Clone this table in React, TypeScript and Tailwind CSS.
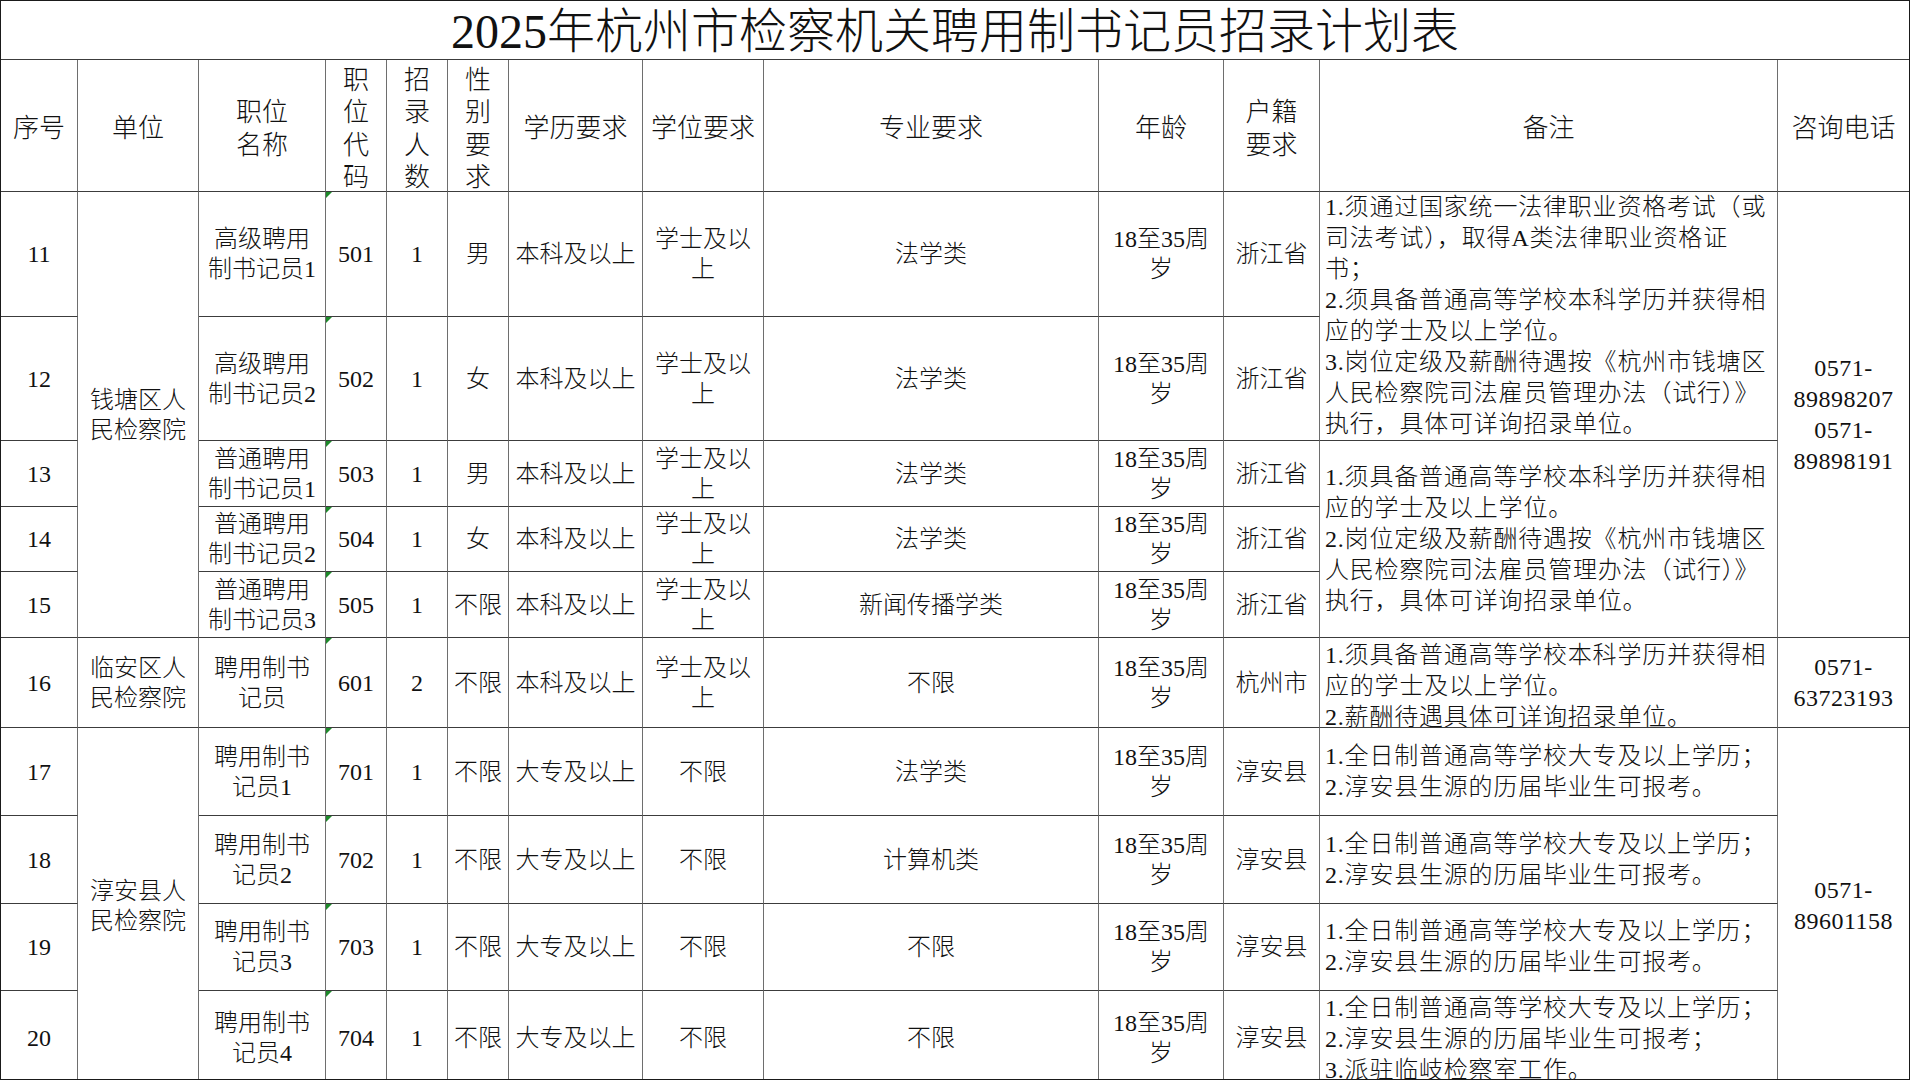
import React from "react";

type CellProps = {
  children?: React.ReactNode;
  className?: string;
  green?: boolean;
};

function Lines({ text }: { text: string }) {
  const parts = text.split("\n");
  return (
    <div>
      {parts.map((p, i) => (
        <div key={i} className="whitespace-nowrap">
          {p}
        </div>
      ))}
    </div>
  );
}

function C({ children, className = "", green }: CellProps) {
  return (
    <div
      className={
        "relative flex overflow-hidden border-r border-b border-r-[#6e6e6e] border-b-[#3c3c3c] " +
        className
      }
    >
      {green && (
        <div className="absolute left-0 top-0 h-0 w-0 border-t-[6px] border-r-[6px] border-t-[#1d8a2a] border-r-transparent" />
      )}
      {children}
    </div>
  );
}

function D({ text, green }: { text: string; green?: boolean }) {
  return (
    <C className="items-center justify-center text-center leading-[30px]" green={green}>
      <Lines text={text} />
    </C>
  );
}

function H({ text }: { text: string }) {
  return (
    <C className="items-center justify-center pt-[8px] text-center text-[26px] leading-[32.5px]">
      <Lines text={text} />
    </C>
  );
}

function R({ text, className = "", top }: { text: string; className?: string; top?: boolean }) {
  return (
    <C
      className={
        (top ? "items-start pt-[2px] " : "items-center ") +
        "justify-start pl-[5px] text-left leading-[31px] tracking-[0.8px] " +
        className
      }
    >
      <Lines text={text} />
    </C>
  );
}

function P({ text, className = "" }: { text: string; className?: string }) {
  return (
    <C className={"items-center justify-center text-center leading-[31px] tracking-[0.5px] " + className}>
      <Lines text={text} />
    </C>
  );
}

const remarkA =
  "1.须通过国家统一法律职业资格考试（或\n司法考试），取得A类法律职业资格证\n书；\n2.须具备普通高等学校本科学历并获得相\n应的学士及以上学位。\n3.岗位定级及薪酬待遇按《杭州市钱塘区\n人民检察院司法雇员管理办法（试行）》\n执行，具体可详询招录单位。";
const remarkB =
  "1.须具备普通高等学校本科学历并获得相\n应的学士及以上学位。\n2.岗位定级及薪酬待遇按《杭州市钱塘区\n人民检察院司法雇员管理办法（试行）》\n执行，具体可详询招录单位。";
const remarkC =
  "1.须具备普通高等学校本科学历并获得相\n应的学士及以上学位。\n2.薪酬待遇具体可详询招录单位。";
const remarkD = "1.全日制普通高等学校大专及以上学历；\n2.淳安县生源的历届毕业生可报考。";
const remarkE =
  "1.全日制普通高等学校大专及以上学历；\n2.淳安县生源的历届毕业生可报考；\n3.派驻临岐检察室工作。";

const age = "18至35周\n岁";
const degree = "学士及以\n上";

export default function App() {
  return (
    <div className="relative h-[1080px] w-[1910px] overflow-hidden bg-white font-['Liberation_Serif','Noto_Sans_CJK_SC',serif] text-[24px] font-light text-[#111]">
      <div className="grid w-[1910px] grid-cols-[77px_121px_127px_61px_61px_61px_134px_121px_335px_125px_96px_458px_132px] grid-rows-[59px_132px_125px_124px_66px_65px_66px_90px_88px_88px_87px_94px] border-l border-t border-[#222]">
        {/* Title */}
        <C className="col-span-13 items-center justify-center border-b-[#2a2a2a] pt-[4px] text-[48px] leading-[56px]">
          <div className="whitespace-nowrap">2025年杭州市检察机关聘用制书记员招录计划表</div>
        </C>

        {/* Header */}
        <H text="序号" />
        <H text="单位" />
        <H text={"职位\n名称"} />
        <H text={"职\n位\n代\n码"} />
        <H text={"招\n录\n人\n数"} />
        <H text={"性\n别\n要\n求"} />
        <H text="学历要求" />
        <H text="学位要求" />
        <H text="专业要求" />
        <H text="年龄" />
        <H text={"户籍\n要求"} />
        <H text="备注" />
        <H text="咨询电话" />

        {/* Row 11 */}
        <D text="11" />
        <C className="row-span-5 items-center justify-center text-center leading-[30px]">
          <Lines text={"钱塘区人\n民检察院"} />
        </C>
        <D text={"高级聘用\n制书记员1"} />
        <D text="501" green />
        <D text="1" />
        <D text="男" />
        <D text="本科及以上" />
        <D text={degree} />
        <D text="法学类" />
        <D text={age} />
        <D text="浙江省" />
        <R text={remarkA} className="row-span-2" />
        <P text={"0571-\n89898207\n0571-\n89898191"} className="row-span-5" />

        {/* Row 12 */}
        <D text="12" />
        <D text={"高级聘用\n制书记员2"} />
        <D text="502" green />
        <D text="1" />
        <D text="女" />
        <D text="本科及以上" />
        <D text={degree} />
        <D text="法学类" />
        <D text={age} />
        <D text="浙江省" />

        {/* Row 13 */}
        <D text="13" />
        <D text={"普通聘用\n制书记员1"} />
        <D text="503" green />
        <D text="1" />
        <D text="男" />
        <D text="本科及以上" />
        <D text={degree} />
        <D text="法学类" />
        <D text={age} />
        <D text="浙江省" />
        <R text={remarkB} className="row-span-3" />

        {/* Row 14 */}
        <D text="14" />
        <D text={"普通聘用\n制书记员2"} />
        <D text="504" green />
        <D text="1" />
        <D text="女" />
        <D text="本科及以上" />
        <D text={degree} />
        <D text="法学类" />
        <D text={age} />
        <D text="浙江省" />

        {/* Row 15 */}
        <D text="15" />
        <D text={"普通聘用\n制书记员3"} />
        <D text="505" green />
        <D text="1" />
        <D text="不限" />
        <D text="本科及以上" />
        <D text={degree} />
        <D text="新闻传播学类" />
        <D text={age} />
        <D text="浙江省" />

        {/* Row 16 */}
        <D text="16" />
        <D text={"临安区人\n民检察院"} />
        <D text={"聘用制书\n记员"} />
        <D text="601" green />
        <D text="2" />
        <D text="不限" />
        <D text="本科及以上" />
        <D text={degree} />
        <D text="不限" />
        <D text={age} />
        <D text="杭州市" />
        <R text={remarkC} top />
        <P text={"0571-\n63723193"} />

        {/* Row 17 */}
        <D text="17" />
        <C className="row-span-4 items-center justify-center text-center leading-[30px]">
          <Lines text={"淳安县人\n民检察院"} />
        </C>
        <D text={"聘用制书\n记员1"} />
        <D text="701" green />
        <D text="1" />
        <D text="不限" />
        <D text="大专及以上" />
        <D text="不限" />
        <D text="法学类" />
        <D text={age} />
        <D text="淳安县" />
        <R text={remarkD} />
        <P text={"0571-\n89601158"} className="row-span-4" />

        {/* Row 18 */}
        <D text="18" />
        <D text={"聘用制书\n记员2"} />
        <D text="702" green />
        <D text="1" />
        <D text="不限" />
        <D text="大专及以上" />
        <D text="不限" />
        <D text="计算机类" />
        <D text={age} />
        <D text="淳安县" />
        <R text={remarkD} />

        {/* Row 19 */}
        <D text="19" />
        <D text={"聘用制书\n记员3"} />
        <D text="703" green />
        <D text="1" />
        <D text="不限" />
        <D text="大专及以上" />
        <D text="不限" />
        <D text="不限" />
        <D text={age} />
        <D text="淳安县" />
        <R text={remarkD} />

        {/* Row 20 */}
        <D text="20" />
        <D text={"聘用制书\n记员4"} />
        <D text="704" green />
        <D text="1" />
        <D text="不限" />
        <D text="大专及以上" />
        <D text="不限" />
        <D text="不限" />
        <D text={age} />
        <D text="淳安县" />
        <R text={remarkE} top />
      </div>
      <div className="pointer-events-none absolute inset-0 border border-[#1a1a1a]" />
    </div>
  );
}
